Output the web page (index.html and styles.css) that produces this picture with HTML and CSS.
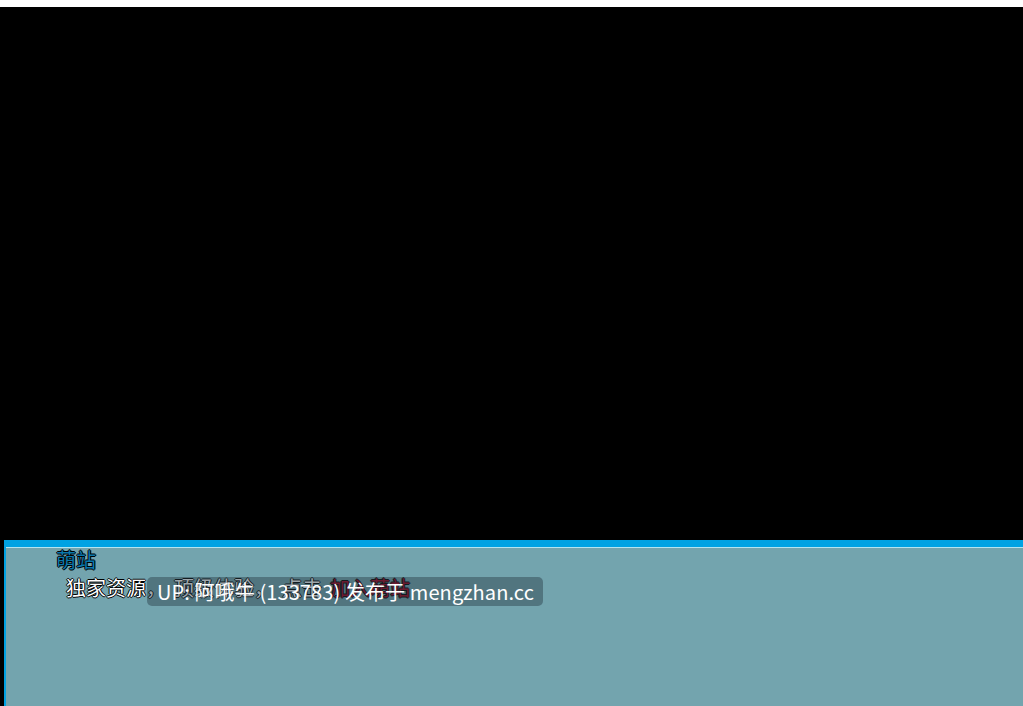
FILE: index.html
```html
<!DOCTYPE html>
<html>
<head>
  <title>萌站</title>
  <link rel="stylesheet" href="styles.css">
</head>
<body>
  <div class="stage">
    <!-- Player area -->
    <div class="screen"></div>

    <!-- Notice panel -->
    <section class="panel">
      <div class="panel-inner">
        <h2 class="site-name">萌站</h2>
        <p class="slogan">独家资源， 顶级体验， 点击 <span class="join">加入萌站</span></p>
      </div>
    </section>

    <!-- Watermark -->
    <div class="watermark">UP: 阿哦牛 (133783) 发布于 mengzhan.cc</div>
  </div>
</body>
</html>
```

FILE: styles.css
```css
/* CSS Styles */
body {
  margin: 0;
  padding: 0;
  background-color: #fff;
  font-family: "Noto Sans CJK SC", "Noto Sans", sans-serif;
}

.stage {
  position: relative;
  margin-top: 7px;
  height: 699px;
  background-color: #000;
  display: flex;
  flex-direction: column;
}

.screen {
  height: 533px;
}

.panel {
  flex: 1;
  margin-left: 4px;
  border-top: 7px solid #00a2e3;
  border-left: 2px solid #00a2e3;
  background-color: #73a4ae;
}

.panel-inner {
  border-top: 1px solid #b4e4f0;
  padding-left: 50px;
  padding-top: 2px;
}

.site-name {
  margin: 0;
  font-size: 20px;
  font-weight: normal;
  line-height: 20px;
  color: #0a78ad;
  text-shadow: 1px 0 0 #000, -1px 0 0 #000, 0 1px 0 #000, 0 -1px 0 #000;
}

.slogan {
  margin: 8px 0 0 10px;
  font-size: 20px;
  line-height: 20px;
  word-spacing: 3.5px;
  color: #fff;
  text-shadow: 1px 0 0 #000, -1px 0 0 #000, 0 1px 0 #000, 0 -1px 0 #000;
}

.join {
  color: #a0001e;
}

.watermark {
  position: absolute;
  left: 147px;
  top: 570px;
  width: 396px;
  height: 29px;
  box-sizing: border-box;
  padding-left: 10px;
  border-radius: 5px;
  background-color: rgba(40, 60, 70, 0.45);
  color: #fff;
  font-size: 20px;
  letter-spacing: 0.1px;
  line-height: 29px;
  white-space: nowrap;
}
```
